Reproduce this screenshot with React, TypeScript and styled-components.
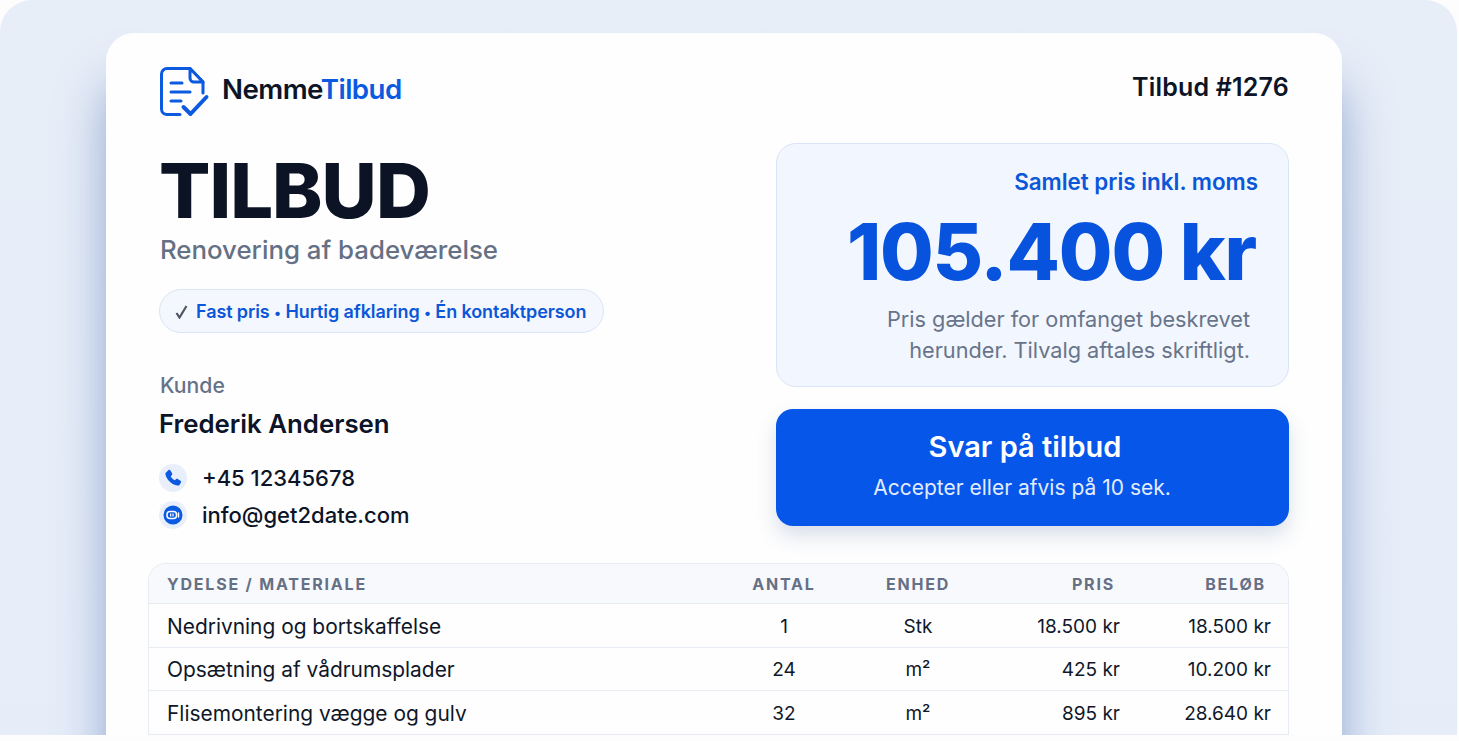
import React from "react";
import styled, { createGlobalStyle } from "styled-components";

const Global = createGlobalStyle`
  html, body { margin: 0; padding: 0; background: #fdfdfe; }
  body { font-family: Inter, "Liberation Sans", sans-serif; overflow: hidden; -webkit-font-smoothing: antialiased; }
  #root { width: 1459px; height: 741px; overflow: hidden; }
`;

const Frame = styled.div`
  box-sizing: border-box;
  width: 1457px;
  height: 735px;
  padding: 33px 115px 0 106px;
  overflow: hidden;
  background: linear-gradient(180deg, #e8eef8 0%, #e6edf9 100%);
  border-radius: 32px 32px 0 0;
`;

const Card = styled.main`
  box-sizing: border-box;
  width: 1236px;
  height: 800px;
  padding: 34px 53px 0 42px;
  background: #fefefe;
  border-radius: 28px;
  box-shadow: 0 50px 48px rgba(60, 100, 170, 0.5);
`;

const Header = styled.header`
  display: flex;
  justify-content: space-between;
  align-items: flex-start;
  padding-left: 12px;
`;

const Brand = styled.div`
  display: flex;
  align-items: center;
  gap: 12px;
  height: 50px;
`;

const BrandName = styled.div`
  padding-bottom: 6px;
  font-size: 27.700px;
  font-weight: 600;
  letter-spacing: -0.55px;
  color: #0c1427;
`;

const BrandAccent = styled.span`
  color: #0b5ae0;
`;

const QuoteNo = styled.div`
  font-size: 25px;
  font-weight: 600;
  line-height: 30px;
  margin-top: 5px;
  letter-spacing: 0.2px;
  color: #0c1427;
`;

const Top = styled.section`
  display: grid;
  grid-template-columns: 1fr 513px;
  margin-top: 27px;
`;

const Left = styled.div`
  padding-left: 12px;
`;

const Title = styled.h1`
  margin: 1px 0 0 -1px;
  font-size: 76px;
  line-height: 90px;
  font-weight: 800;
  letter-spacing: -1px;
  color: #0b1325;
`;

const Subtitle = styled.div`
  font-size: 25.8px;
  line-height: 30px;
  font-weight: 500;
  color: #657084;
  margin-top: 0;
`;

const Pill = styled.div`
  box-sizing: border-box;
  display: inline-flex;
  align-items: center;
  gap: 8px;
  height: 44px;
  margin: 24px 0 0 -1px;
  padding: 0 17px 0 15px;
  border: 1px solid #dbe5f7;
  border-radius: 22px;
  background: #f4f7fd;
  font-size: 18px;
  font-weight: 600;
  letter-spacing: -0.1px;
  color: #0b57d8;
`;

const PillCheck = styled.svg`
  width: 13px;
  height: 14px;
  margin-top: 2px;
`;

const Dot = styled.span`
  font-size: 14px;
  margin: 0;
`;

const CustomerLabel = styled.div`
  margin-top: 39px;
  font-size: 21.2px;
  line-height: 26px;
  font-weight: 500;
  color: #667287;
`;

const CustomerName = styled.div`
  margin: 11px 0 0 -1px;
  font-size: 25.8px;
  line-height: 30px;
  font-weight: 600;
  color: #0c1427;
`;

const Contacts = styled.div`
  display: flex;
  flex-direction: column;
  gap: 8px;
  margin: 24px 0 0 -1px;
`;

const ContactRow = styled.div`
  display: flex;
  align-items: center;
  gap: 15px;
  height: 29px;
  font-size: 22px;
  font-weight: 500;
  color: #0c1427;
`;

const IconDisc = styled.span`
  display: flex;
  align-items: center;
  justify-content: center;
  width: 28px;
  height: 28px;
  border-radius: 50%;
  background: #e8effb;
`;

const Right = styled.aside`
  display: flex;
  flex-direction: column;
  gap: 22px;
`;

const PriceBox = styled.div`
  box-sizing: border-box;
  height: 244px;
  padding: 23px 30px 0 30px;
  margin-top: -1px;
  border: 1px solid #d9e4f6;
  border-radius: 20px;
  background: #f2f6fe;
  text-align: right;
`;

const PriceLabel = styled.div`
  font-size: 22.4px;
  line-height: 30px;
  font-weight: 600;
  color: #0b57d8;
`;

const PriceValue = styled.div`
  margin-top: 8px;
  padding-right: 2px;
  font-size: 77.7px;
  line-height: 94px;
  font-weight: 800;
  letter-spacing: -1.2px;
  color: #0853de;
`;

const PriceNote = styled.div`
  margin-top: 5px;
  padding-right: 8px;
  font-size: 21.7px;
  line-height: 30.5px;
  color: #68748a;
`;

const Cta = styled.button`
  display: flex;
  flex-direction: column;
  align-items: center;
  width: 513px;
  height: 117px;
  padding: 19px 15px 0 0;
  border: 0;
  border-radius: 17px;
  background: #0656e9;
  color: #fff;
  font-family: inherit;
  box-shadow: 0 10px 20px rgba(70, 100, 150, 0.2);
`;

const CtaTitle = styled.span`
  font-size: 29px;
  line-height: 38px;
  font-weight: 600;
`;

const CtaSub = styled.span`
  margin: 8px 6px 0 0;
  font-size: 21px;
  line-height: 28px;
  color: #e3ecff;
`;

const Table = styled.div`
  box-sizing: border-box;
  margin-top: 34px;
  width: 1141px;
  border: 1px solid #e7ebf2;
  border-bottom: 0;
  border-radius: 18px 18px 0 0;
  overflow: hidden;
`;

const Row = styled.div<{ $head?: boolean }>`
  display: grid;
  grid-template-columns: 558px 118px 150px 127px 1fr;
  align-items: center;
  height: ${(p) => (p.$head ? "39px" : "43.500px")};
  padding: ${(p) => (p.$head ? "0" : "2px")} 17px 0 18px;
  box-sizing: ${(p) => (p.$head ? "content-box" : "border-box")};
  border-bottom: 1px solid #e7ebf2;
  background: ${(p) => (p.$head ? "#f8f9fc" : "#fefefe")};
`;

const Cell = styled.div<{ $head?: boolean; $align?: string }>`
  text-align: ${(p) => p.$align || "left"};
  font-size: ${(p) => (p.$head ? "16px" : "20.9px")};
  font-weight: ${(p) => (p.$head ? 700 : 400)};
  letter-spacing: ${(p) => (p.$head ? "1.8px" : "0")};
  color: ${(p) => (p.$head ? "#667085" : "#0f1729")};
`;

const NumCell = styled(Cell)`
  font-size: ${(p) => (p.$head ? "16px" : "19px")};
  padding-right: ${(p) => (p.$head ? "5px" : "0")};
`;

const Logo = () => (
  <svg width="50" height="50" viewBox="0 0 50 50" fill="none" stroke="#0b5ae0" strokeLinecap="round" strokeLinejoin="round">
    <path d="M20 47.500H7a5.500 5.500 0 0 1-5.500-5.500V7A5.500 5.500 0 0 1 7 1.500H30L43 15v11" strokeWidth="3" />
    <path d="M30 1.500V11a4 4 0 0 0 4 4h9z" fill="#fff" strokeWidth="3" />
    <path d="M11 16h11M11 25h19M11 34h10" strokeWidth="3" />
    <path d="M23.500 40l7 7 16-17" strokeWidth="4" />
  </svg>
);

const Phone = () => (
  <svg width="20" height="20" viewBox="0 0 24 24" fill="#0b5ae0">
    <path d="M6.600 2.500c.8-.5 1.800-.3 2.300.5l2 3.300c.4.700.3 1.500-.2 2.100L9.300 10c.9 2 2.500 3.800 4.700 4.800l1.600-1.400c.6-.5 1.400-.6 2.100-.2l3.300 2c.8.500 1 1.500.5 2.300l-1.300 2.300c-.6 1-1.700 1.600-2.900 1.300C10.200 19.700 4.300 13.800 3 7.700c-.3-1.200.3-2.300 1.300-2.900z" />
  </svg>
);

const MailBadge = () => (
  <svg width="20" height="20" viewBox="0 0 20 20">
    <circle cx="10" cy="10" r="9.500" fill="#0b5ae0" />
    <rect x="4" y="6.500" width="9.500" height="7" rx="3" fill="none" stroke="#fff" strokeWidth="1.500" />
    <path d="M7.700 8.500v3M10 8.500v3" stroke="#fff" strokeWidth="1.200" />
    <path d="M15.500 8v4" stroke="#fff" strokeWidth="1.500" strokeLinecap="round" />
  </svg>
);

const rows = [
  ["Nedrivning og bortskaffelse", "1", "Stk", "18.500 kr", "18.500 kr"],
  ["Opsætning af vådrumsplader", "24", "m²", "425 kr", "10.200 kr"],
  ["Flisemontering vægge og gulv", "32", "m²", "895 kr", "28.640 kr"],
];

export default function App() {
  return (
    <>
      <Global />
      <Frame>
        <Card>
          <Header>
            <Brand>
              <Logo />
              <BrandName>
                Nemme<BrandAccent>Tilbud</BrandAccent>
              </BrandName>
            </Brand>
            <QuoteNo>Tilbud #1276</QuoteNo>
          </Header>
          <Top>
            <Left>
              <Title>TILBUD</Title>
              <Subtitle>Renovering af badeværelse</Subtitle>
              <Pill>
                <PillCheck viewBox="0 0 13 14" fill="none">
                  <path d="M1.500 8l3 4.500 7-11.500" stroke="#4f5663" strokeWidth="2.200" />
                </PillCheck>
                <span>
                  Fast pris <Dot>•</Dot> Hurtig afklaring <Dot>•</Dot> Én kontaktperson
                </span>
              </Pill>
              <CustomerLabel>Kunde</CustomerLabel>
              <CustomerName>Frederik Andersen</CustomerName>
              <Contacts>
                <ContactRow>
                  <IconDisc>
                    <Phone />
                  </IconDisc>
                  +45 12345678
                </ContactRow>
                <ContactRow>
                  <IconDisc>
                    <MailBadge />
                  </IconDisc>
                  info@get2date.com
                </ContactRow>
              </Contacts>
            </Left>
            <Right>
              <PriceBox>
                <PriceLabel>Samlet pris inkl. moms</PriceLabel>
                <PriceValue>105.400 kr</PriceValue>
                <PriceNote>
                  Pris gælder for omfanget beskrevet
                  <br />
                  herunder. Tilvalg aftales skriftligt.
                </PriceNote>
              </PriceBox>
              <Cta>
                <CtaTitle>Svar på tilbud</CtaTitle>
                <CtaSub>Accepter eller afvis på 10 sek.</CtaSub>
              </Cta>
            </Right>
          </Top>
          <Table>
            <Row $head>
              <Cell $head>YDELSE / MATERIALE</Cell>
              <Cell $head $align="center">ANTAL</Cell>
              <Cell $head $align="center">ENHED</Cell>
              <NumCell $head $align="right">PRIS</NumCell>
              <NumCell $head $align="right">BELØB</NumCell>
            </Row>
            {rows.map((r) => (
              <Row key={r[0]}>
                <Cell>{r[0]}</Cell>
                <NumCell $align="center">{r[1]}</NumCell>
                <NumCell $align="center">{r[2]}</NumCell>
                <NumCell $align="right">{r[3]}</NumCell>
                <NumCell $align="right">{r[4]}</NumCell>
              </Row>
            ))}
          </Table>
        </Card>
      </Frame>
    </>
  );
}
